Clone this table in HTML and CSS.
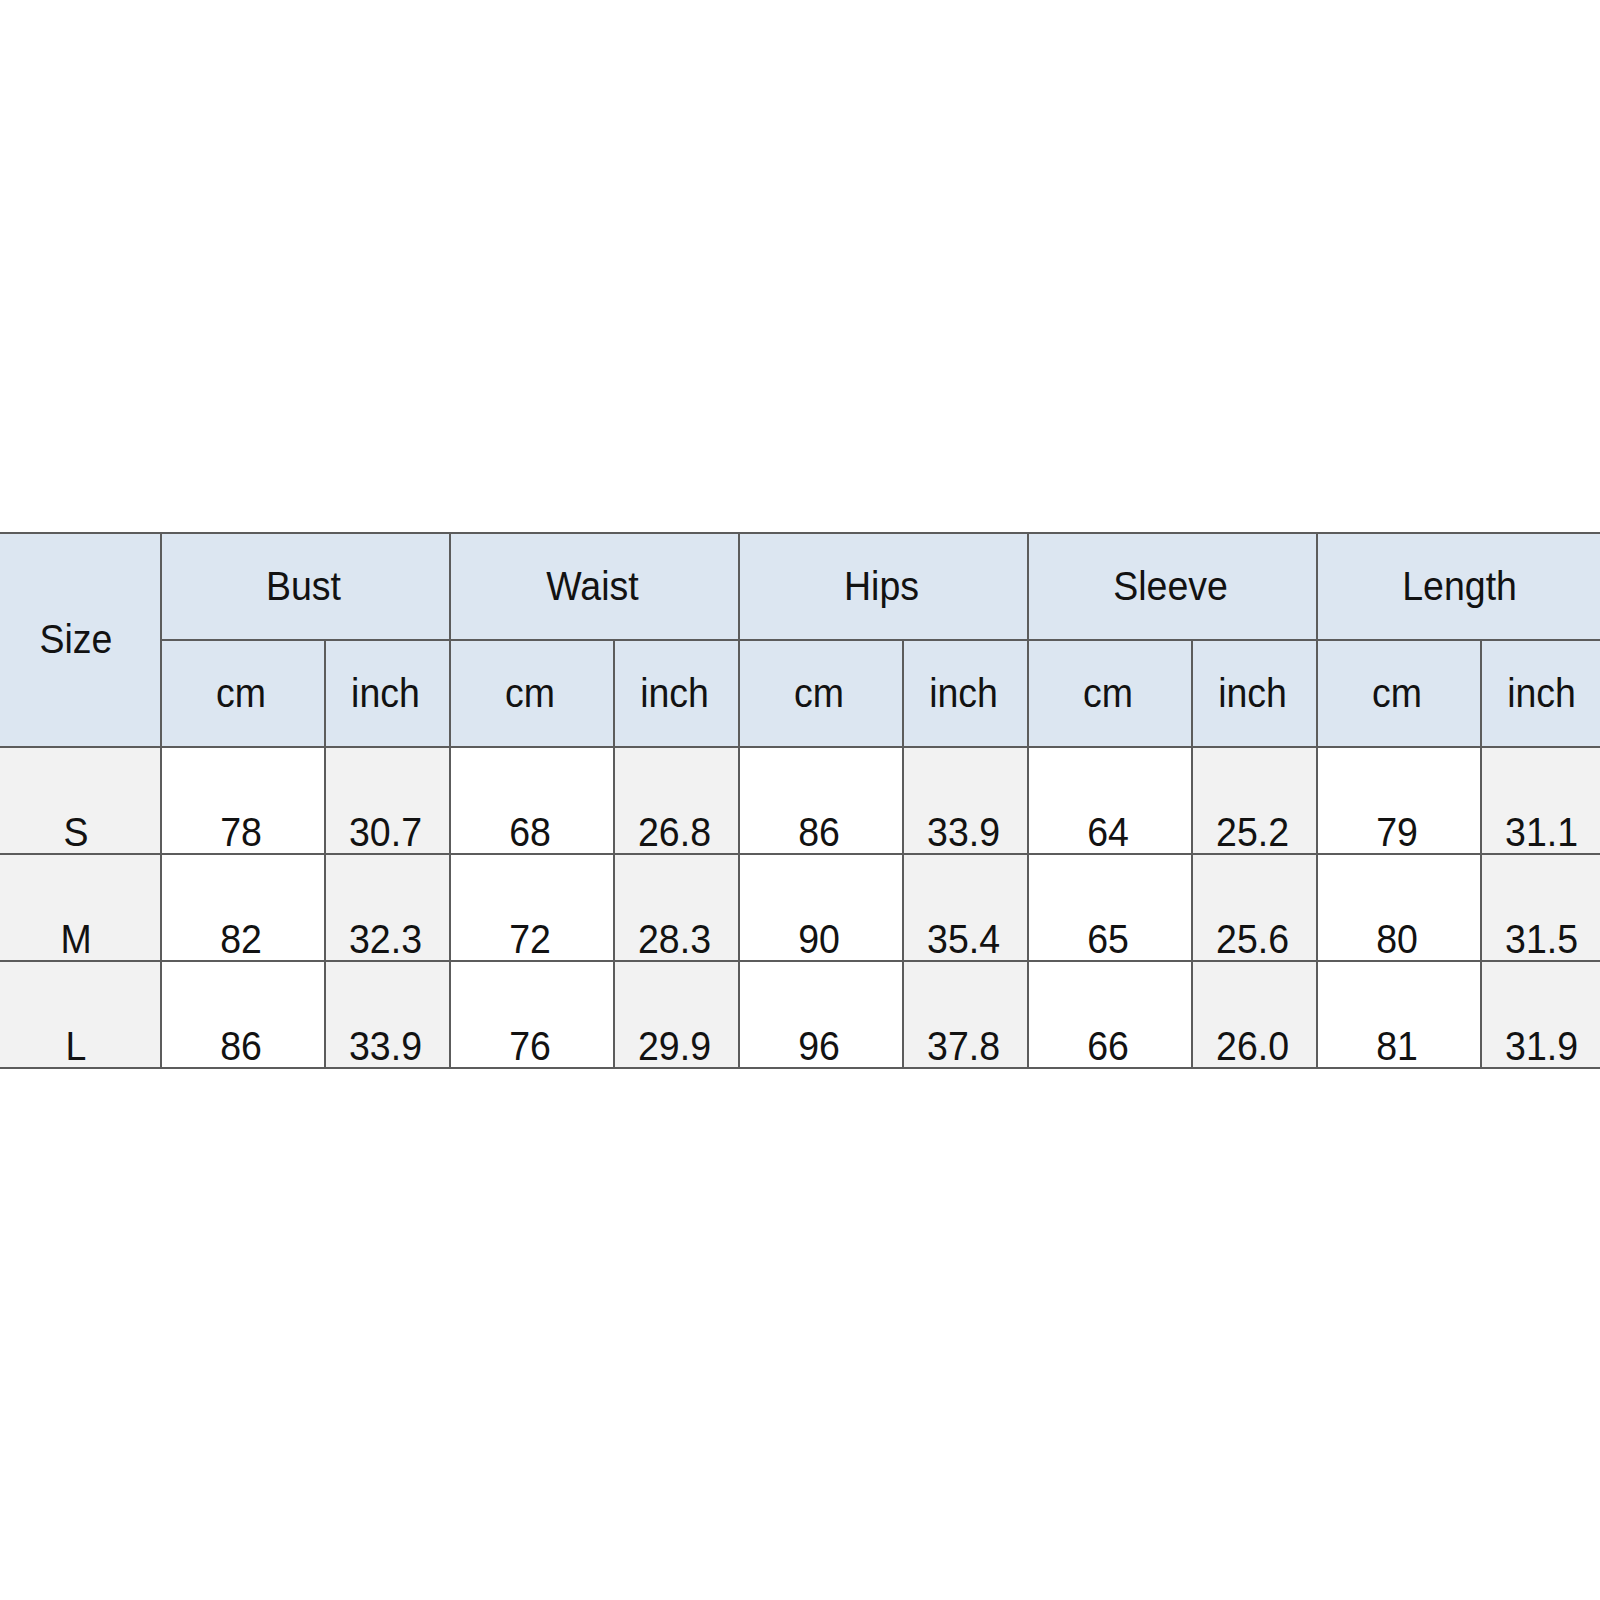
FILE: index.html
```html
<!DOCTYPE html>
<html>
<head>
<meta charset="utf-8">
<link rel="stylesheet" href="styles.css">
</head>
<body>
<table class="size-chart">
  <colgroup>
    <col class="c-size">
    <col class="c-cm"><col class="c-in">
    <col class="c-cm"><col class="c-in">
    <col class="c-cm"><col class="c-in">
    <col class="c-cm"><col class="c-in">
    <col class="c-cm"><col class="c-in">
  </colgroup>
  <thead>
    <tr class="hrow">
      <th rowspan="2" class="hd"><span class="t">Size</span></th>
      <th colspan="2" class="hd"><span class="t">Bust</span></th>
      <th colspan="2" class="hd"><span class="t">Waist</span></th>
      <th colspan="2" class="hd"><span class="t">Hips</span></th>
      <th colspan="2" class="hd"><span class="t">Sleeve</span></th>
      <th colspan="2" class="hd"><span class="t">Length</span></th>
    </tr>
    <tr class="hrow">
      <th class="hd"><span class="t">cm</span></th><th class="hd"><span class="t">inch</span></th>
      <th class="hd"><span class="t">cm</span></th><th class="hd"><span class="t">inch</span></th>
      <th class="hd"><span class="t">cm</span></th><th class="hd"><span class="t">inch</span></th>
      <th class="hd"><span class="t">cm</span></th><th class="hd"><span class="t">inch</span></th>
      <th class="hd"><span class="t">cm</span></th><th class="hd"><span class="t">inch</span></th>
    </tr>
  </thead>
  <tbody>
    <tr class="drow">
      <td class="g"><span class="t">S</span></td>
      <td class="w"><span class="t">78</span></td><td class="g"><span class="t">30.7</span></td>
      <td class="w"><span class="t">68</span></td><td class="g"><span class="t">26.8</span></td>
      <td class="w"><span class="t">86</span></td><td class="g"><span class="t">33.9</span></td>
      <td class="w"><span class="t">64</span></td><td class="g"><span class="t">25.2</span></td>
      <td class="w"><span class="t">79</span></td><td class="g"><span class="t">31.1</span></td>
    </tr>
    <tr class="drow">
      <td class="g"><span class="t">M</span></td>
      <td class="w"><span class="t">82</span></td><td class="g"><span class="t">32.3</span></td>
      <td class="w"><span class="t">72</span></td><td class="g"><span class="t">28.3</span></td>
      <td class="w"><span class="t">90</span></td><td class="g"><span class="t">35.4</span></td>
      <td class="w"><span class="t">65</span></td><td class="g"><span class="t">25.6</span></td>
      <td class="w"><span class="t">80</span></td><td class="g"><span class="t">31.5</span></td>
    </tr>
    <tr class="drow">
      <td class="g"><span class="t">L</span></td>
      <td class="w"><span class="t">86</span></td><td class="g"><span class="t">33.9</span></td>
      <td class="w"><span class="t">76</span></td><td class="g"><span class="t">29.9</span></td>
      <td class="w"><span class="t">96</span></td><td class="g"><span class="t">37.8</span></td>
      <td class="w"><span class="t">66</span></td><td class="g"><span class="t">26.0</span></td>
      <td class="w"><span class="t">81</span></td><td class="g"><span class="t">31.9</span></td>
    </tr>
  </tbody>
</table>
</body>
</html>
```

FILE: styles.css
```css
html, body {
  margin: 0;
  padding: 0;
  background: #ffffff;
  overflow: hidden;
}

body {
  width: 1600px;
  height: 1600px;
}

.size-chart {
  border-collapse: collapse;
  table-layout: fixed;
  width: 1611px;
  margin-top: 532px;
  margin-left: -6px;
  font-family: "Liberation Sans", Arial, sans-serif;
  font-size: 37.5px;
  color: #121212;
}

.c-size { width: 166px; }
.c-cm { width: 164px; }
.c-in { width: 125px; }

.size-chart th,
.size-chart td {
  border: 2px solid #5c5c5c;
  padding: 0 4px 0 0;
  text-align: center;
  font-weight: normal;
  line-height: 36px;
}

.hrow { height: 107px; }
.drow { height: 107px; }

.hd {
  background: #dce6f1;
  vertical-align: middle;
}

.size-chart td {
  vertical-align: bottom;
  padding-bottom: 2px;
}

.g { background: #f2f2f2; }
.w { background: #ffffff; }

.t {
  display: inline-block;
  transform: scaleY(1.06);
  transform-origin: 50% 80%;
}
```
